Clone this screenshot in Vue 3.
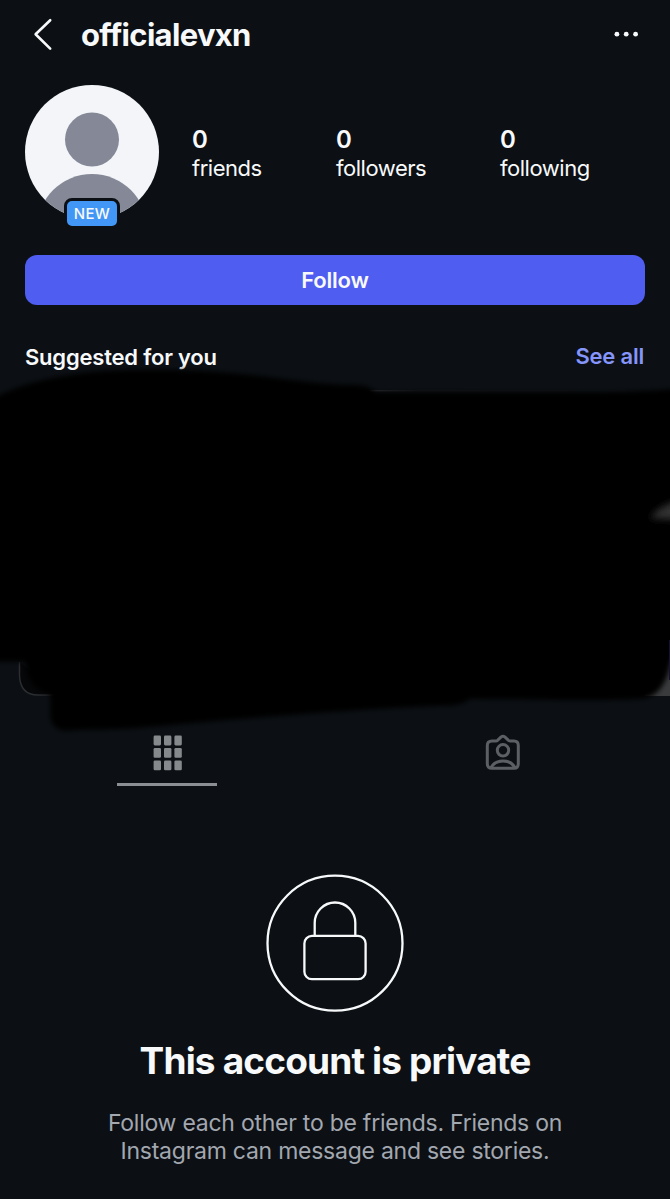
<template>
  <div class="profile">
    <header class="top-bar">
      <button class="icon-btn" aria-label="Back">
        <svg width="20" height="34" viewBox="0 0 20 34">
          <path d="M17.2 3.2 L2.6 17.2 L17.2 31.6" />
        </svg>
      </button>
      <h1 class="username">{{ username }}</h1>
      <button class="icon-btn more" aria-label="More options">
        <svg width="26" height="8" viewBox="0 0 26 8">
          <circle cx="3.9" cy="4.2" r="2.4" />
          <circle cx="13.2" cy="4.2" r="2.4" />
          <circle cx="22.6" cy="4.2" r="2.4" />
        </svg>
      </button>
    </header>

    <section class="summary">
      <div class="avatar">
        <svg width="134" height="134" viewBox="0 0 134 134">
          <defs>
            <clipPath id="avatar-clip">
              <circle cx="67" cy="67" r="67" />
            </clipPath>
          </defs>
          <g clip-path="url(#avatar-clip)">
            <rect width="134" height="134" fill="#f3f5f8" />
            <circle cx="67" cy="54.5" r="27" fill="#858997" />
            <circle cx="67" cy="144" r="55" fill="#858997" />
          </g>
        </svg>
        <span class="badge">NEW</span>
      </div>
      <div class="stats">
        <div v-for="stat in stats" :key="stat.label" class="stat">
          <strong>{{ stat.value }}</strong>
          <span>{{ stat.label }}</span>
        </div>
      </div>
    </section>

    <button class="btn-follow">Follow</button>

    <div class="suggested-header">
      <h2>Suggested for you</h2>
      <a class="see-all">See all</a>
    </div>

    <!-- Suggested accounts, covered by brush strokes -->
    <div class="suggested">
      <svg width="670" height="372" viewBox="0 364 670 372">
        <defs>
          <filter id="brush" x="-5%" y="-5%" width="110%" height="110%">
            <feGaussianBlur stdDeviation="2.5" />
          </filter>
          <filter id="glow" x="-50%" y="-150%" width="200%" height="400%">
            <feGaussianBlur stdDeviation="3.5" />
          </filter>
          <linearGradient id="edge" x1="0" x2="1">
            <stop offset="0" stop-color="#2b2d30" />
            <stop offset="0.15" stop-color="#14171a" />
            <stop offset="1" stop-color="#0c1014" />
          </linearGradient>
        </defs>
        <rect x="370" y="390" width="300" height="1.5" fill="url(#edge)" />
        <path d="M19.5 662 V675 Q20 695 38 695 H60" fill="#060709" stroke="#2b2d30" stroke-width="1.5" />
        <path d="M645 620 H670 V696 H645 Z" fill="#3a3b3d" />
        <path
          filter="url(#brush)"
          d="M-10 400 C15 386 45 377 90 372 C150 367 215 370 270 377 C305 382 335 385 360 385 Q370 386 376 392 H600 Q640 392 680 388 V646 Q672 655 668 674 Q660 697 642 699 C590 702 530 699 470 699 Q462 707 440 706 C340 710 230 720 150 727 C110 731 80 729 68 731 Q50 731 50 714 V694 Q28 690 25 662 L-10 662 Z"
          fill="#000"
        />
        <path d="M650 518 Q660 505 680 500 V520 Z" fill="#303030" filter="url(#glow)" />
        <path d="M669.5 640 V680" stroke="#17102e" stroke-width="1" />
      </svg>
    </div>

    <nav class="tabs">
      <button class="tab active" aria-label="Posts">
        <svg width="30" height="36" viewBox="0 0 30 36">
          <rect v-for="cell in gridCells" :key="cell.id" :x="cell.x" :y="cell.y" width="7.4" height="9.8" rx="1.3" />
        </svg>
      </button>
      <button class="tab" aria-label="Tagged">
        <svg class="tagged" width="38" height="38" viewBox="0 0 38 38">
          <path d="M8 7 H11.5 Q13 7 14 5.9 L17.2 2.9 Q19 1.5 20.8 2.9 L24 5.9 Q25 7 26.5 7 H30 Q34.3 7 34.3 11.5 V29.8 Q34.3 34.3 30 34.3 H8 Q3.3 34.3 3.3 29.8 V11.5 Q3.3 7 8 7 Z" />
          <circle cx="19" cy="16.3" r="5.7" />
          <path d="M6.8 34 C11.5 24.5 26.5 24.5 31.2 34" />
        </svg>
      </button>
    </nav>

    <section class="private">
      <svg width="138" height="138" viewBox="0 0 138 138">
        <circle cx="69" cy="69.2" r="67.5" />
        <path d="M48.7 61.5 V48.8 A20.3 20.3 0 0 1 89.3 48.8 V61.5" />
        <rect x="38.4" y="61.9" width="61.2" height="43.3" rx="7.5" />
      </svg>
      <h2>This account is private</h2>
      <p>Follow each other to be friends. Friends on<br />Instagram can message and see stories.</p>
    </section>
  </div>
</template>

<script setup>
import { ref } from 'vue'

const username = ref('officialevxn')

const stats = ref([
  { label: 'friends', value: 0 },
  { label: 'followers', value: 0 },
  { label: 'following', value: 0 },
])

// 3x3 grid icon
const gridCells = Array.from({ length: 9 }, (_, i) => ({
  id: i,
  x: 1.6 + (i % 3) * 10.4,
  y: 0.6 + Math.floor(i / 3) * 12.4,
}))
</script>

<style>
body {
  background: #0c1014;
}
</style>

<style scoped>
.profile {
  width: 670px;
  height: 1199px;
  overflow: hidden;
  background: #0c1014;
  color: #f8f9fb;
  font-family: Inter, "Liberation Sans", sans-serif;
}

h1,
h2,
p {
  margin: 0;
}

button {
  padding: 0;
  border: none;
  background: none;
  color: inherit;
  font-family: inherit;
  cursor: pointer;
}

svg {
  display: block;
}

.top-bar {
  display: flex;
  align-items: center;
  height: 68px;
  padding: 0 31px 0 33px;
}

.icon-btn svg {
  fill: none;
  stroke: #f8f9fb;
  stroke-width: 2.6;
  stroke-linecap: round;
  stroke-linejoin: round;
}

.more {
  margin-left: auto;
}

.more svg {
  fill: #f8f9fb;
  stroke: none;
}

.username {
  margin-left: 28px;
  padding-top: 2px;
  font-size: 31px;
  font-weight: 700;
  line-height: 38px;
  letter-spacing: -0.68px;
}

.summary {
  display: flex;
  height: 134px;
  padding: 17px 25px 0;
}

.avatar {
  position: relative;
  width: 134px;
  height: 134px;
}

.badge {
  position: absolute;
  left: 39px;
  top: 113px;
  box-sizing: border-box;
  width: 56px;
  height: 31px;
  border: 3px solid #0c1014;
  border-radius: 8px;
  background: #4296f5;
  font-size: 15px;
  font-weight: 500;
  line-height: 25px;
  letter-spacing: 0.4px;
  text-align: center;
}

.stats {
  display: grid;
  grid-template-columns: 144px 164px 100px;
  margin-left: 33px;
  padding-top: 41px;
}

.stat {
  display: flex;
  flex-direction: column;
}

.stat strong {
  font-size: 24px;
  font-weight: 600;
  line-height: 28px;
}

.stat span {
  font-size: 22px;
  line-height: 28px;
  letter-spacing: -0.47px;
}

.btn-follow {
  display: block;
  width: 620px;
  height: 50px;
  margin: 36px 25px 0;
  border-radius: 12px;
  background: #4f5df0;
  font-size: 22px;
  font-weight: 600;
  letter-spacing: -0.2px;
}

.suggested-header {
  display: flex;
  justify-content: space-between;
  height: 59px;
  padding: 37px 26px 0 25px;
  box-sizing: border-box;
}

.suggested-header h2 {
  font-size: 22px;
  font-weight: 600;
  line-height: 30px;
  letter-spacing: -0.21px;
}

.see-all {
  color: #8595fa;
  font-size: 22px;
  font-weight: 600;
  line-height: 28px;
  letter-spacing: -0.2px;
}

.suggested {
  height: 371px;
}

.tabs {
  display: flex;
  height: 51px;
}

.tab {
  display: flex;
  flex: 1;
  justify-content: center;
}

.tab.active {
  flex-direction: column;
  justify-content: space-between;
  align-items: center;
  padding-right: 1px;
  fill: #85898c;
}

.tab.active::after {
  width: 100px;
  height: 3px;
  background: #8b8f93;
  content: "";
}

.tagged {
  margin-top: -1px;
  fill: none;
  stroke: #5c6064;
  stroke-width: 3;
  stroke-linejoin: round;
}

.private {
  display: flex;
  flex-direction: column;
  align-items: center;
  padding-top: 88px;
  text-align: center;
}

.private svg {
  fill: none;
  stroke: #f8f9fb;
  stroke-width: 2.3;
}

.private h2 {
  margin-top: 26px;
  font-size: 37px;
  font-weight: 700;
  line-height: 46px;
  letter-spacing: -0.84px;
}

.private p {
  margin-top: 25px;
  color: #a2a7b0;
  font-size: 23px;
  line-height: 28px;
  letter-spacing: -0.25px;
}
</style>
